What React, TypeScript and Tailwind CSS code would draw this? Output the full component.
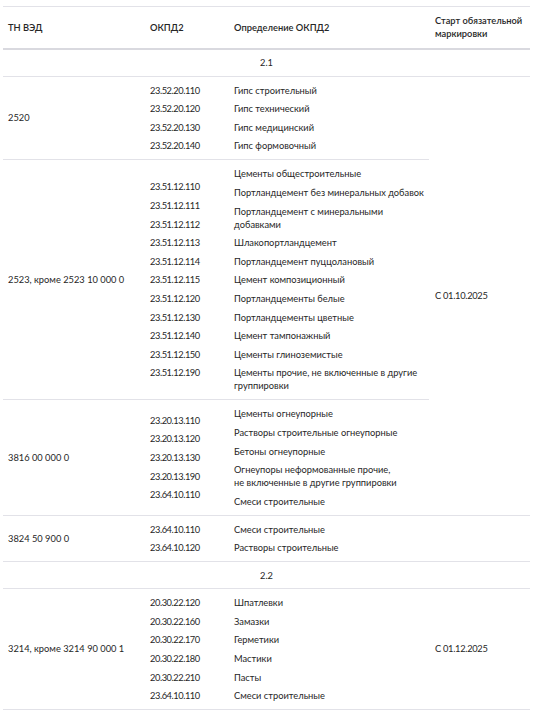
import React from "react";

type Row = {
  tn: string;
  codes: string[];
  defs: React.ReactNode[];
  date?: string;
  dateSpan?: number;
  noDate?: boolean;
};

const section1: Row[] = [
  {
    tn: "2520",
    codes: ["23.52.20.110", "23.52.20.120", "23.52.20.130", "23.52.20.140"],
    defs: ["Гипс строительный", "Гипс технический", "Гипс медицинский", "Гипс формовочный"],
    date: "С 01.10.2025",
    dateSpan: 3,
  },
  {
    tn: "2523, кроме 2523 10 000 0",
    codes: [
      "23.51.12.110",
      "23.51.12.111",
      "23.51.12.112",
      "23.51.12.113",
      "23.51.12.114",
      "23.51.12.115",
      "23.51.12.120",
      "23.51.12.130",
      "23.51.12.140",
      "23.51.12.150",
      "23.51.12.190",
    ],
    defs: [
      "Цементы общестроительные",
      "Портландцемент без минеральных добавок",
      <>
        Портландцемент с минеральными
        <br />
        добавками
      </>,
      "Шлакопортландцемент",
      "Портландцемент пуццолановый",
      "Цемент композиционный",
      "Портландцементы белые",
      "Портландцементы цветные",
      "Цемент тампонажный",
      "Цементы глиноземистые",
      <>
        Цементы прочие, не включенные в другие
        <br />
        группировки
      </>,
    ],
    noDate: true,
  },
  {
    tn: "3816 00 000 0",
    codes: ["23.20.13.110", "23.20.13.120", "23.20.13.130", "23.20.13.190", "23.64.10.110"],
    defs: [
      "Цементы огнеупорные",
      "Растворы строительные огнеупорные",
      "Бетоны огнеупорные",
      <>
        Огнеупоры неформованные прочие,
        <br />
        не включенные в другие группировки
      </>,
      "Смеси строительные",
    ],
    noDate: true,
  },
  {
    tn: "3824 50 900 0",
    codes: ["23.64.10.110", "23.64.10.120"],
    defs: ["Смеси строительные", "Растворы строительные"],
    date: "",
  },
];

const section2: Row[] = [
  {
    tn: "3214, кроме 3214 90 000 1",
    codes: ["20.30.22.120", "20.30.22.160", "20.30.22.170", "20.30.22.180", "20.30.22.210", "23.64.10.110"],
    defs: ["Шпатлевки", "Замазки", "Герметики", "Мастики", "Пасты", "Смеси строительные"],
    date: "С 01.12.2025",
  },
];

const cell = "border-b border-[#e2e2e8] align-middle px-[5px] py-[7px]";

function List({ items, num }: { items: React.ReactNode[]; num?: boolean }) {
  return (
    <div className={"flex flex-col gap-[5.6px]" + (num ? " tracking-[-0.45px]" : "")}>
      {items.map((it, i) => (
        <div key={i} className="whitespace-nowrap leading-[13px]">
          {it}
        </div>
      ))}
    </div>
  );
}

function DataRow({ r }: { r: Row }) {
  return (
    <tr>
      <td className={cell + " whitespace-nowrap"}>{r.tn}</td>
      <td className={cell}>
        <List items={r.codes} num />
      </td>
      <td className={cell}>
        <List items={r.defs} />
      </td>
      {!r.noDate && (
        <td className={cell + " pl-[6px] tracking-[-0.3px]"} rowSpan={r.dateSpan ?? 1}>
          {r.date}
        </td>
      )}
    </tr>
  );
}

function SectionRow({ label }: { label: string }) {
  return (
    <tr>
      <td colSpan={4} className="border-b border-[#e2e2e8] text-center leading-[13px] py-[6.5px]">
        {label}
      </td>
    </tr>
  );
}

const th = "border-b-2 border-[#d9d9df] px-[5px] py-[7px] align-middle font-semibold whitespace-nowrap";

export default function App() {
  return (
    <div
      className="w-[540px] h-[720px] bg-white pl-[3px] pt-[6px] text-[9.3px] text-[#262626] overflow-hidden"
      style={{ fontFamily: "Lato, 'Open Sans', sans-serif" }}
    >
      <table className="w-[527px] border-collapse table-fixed border-t border-[#e2e2e8]">
        <colgroup>
          <col className="w-[142px]" />
          <col className="w-[84px]" />
          <col className="w-[200px]" />
          <col className="w-[101px]" />
        </colgroup>
        <thead>
          <tr className="text-left font-semibold leading-[13.3px]">
            <th className={th}>ТН ВЭД</th>
            <th className={th}>ОКПД2</th>
            <th className={th}>Определение ОКПД2</th>
            <th className={th + " pl-[6px] pr-0"}>
              Старт обязательной
              <br />
              маркировки
            </th>
          </tr>
        </thead>
        <tbody>
          <SectionRow label="2.1" />
          {section1.map((r, i) => (
            <DataRow key={i} r={r} />
          ))}
          <SectionRow label="2.2" />
          {section2.map((r, i) => (
            <DataRow key={i} r={r} />
          ))}
        </tbody>
      </table>
    </div>
  );
}
